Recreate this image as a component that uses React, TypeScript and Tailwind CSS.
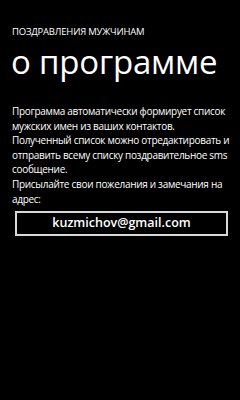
const lines = [
  "Программа автоматически формирует список",
  "мужских имен из ваших контактов.",
  "Полученный список можно отредактировать и",
  "отправить всему списку поздравительное sms",
  "сообщение.",
  "Присылайте свои пожелания и замечания на",
  "адрес:",
];

export default function App() {
  return (
    <div
      className="w-[240px] h-[400px] bg-black text-white overflow-hidden"
      style={{ fontFamily: '"Open Sans", "Noto Sans", sans-serif' }}
    >
      <div className="pl-[12px] pt-[25px]">
        <div className="text-[9.5px] leading-[14px] tracking-[-0.2px]">ПОЗДРАВЛЕНИЯ МУЖЧИНАМ</div>
        <div className="text-[33px] leading-[40px] mt-[3px] -ml-[1px] tracking-[-0.2px]">о программе</div>
      </div>
      <div className="pl-[12px] mt-[22px] text-[10px] leading-[14.6px] tracking-[-0.3px] whitespace-nowrap">
        {lines.map((l) => (
          <div key={l}>{l}</div>
        ))}
      </div>
      <div className="ml-[15px] mt-[5px] w-[213px] h-[25px] border-2 border-[#d8d8d8] flex items-center justify-center">
        <span className="text-[12.5px] font-semibold">kuzmichov@gmail.com</span>
      </div>
    </div>
  );
}
